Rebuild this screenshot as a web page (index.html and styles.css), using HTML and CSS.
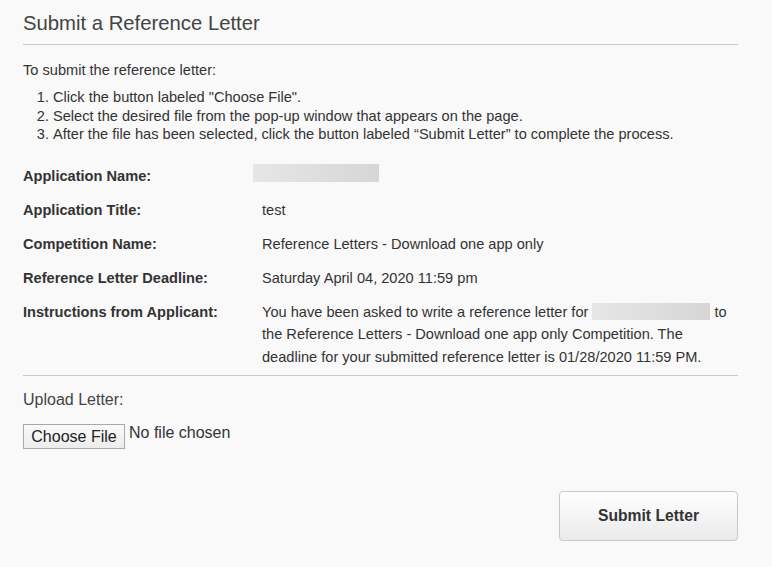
FILE: index.html
```html
<!DOCTYPE html>
<html>
<head>
<meta charset="utf-8">
<link rel="stylesheet" href="styles.css">
</head>
<body>
<div class="page">
  <h1 class="title">Submit a Reference Letter</h1>
  <p class="intro">To submit the reference letter:</p>
  <ol class="steps">
    <li>Click the button labeled "Choose File".</li>
    <li>Select the desired file from the pop-up window that appears on the page.</li>
    <li>After the file has been selected, click the button labeled “Submit Letter” to complete the process.</li>
  </ol>
  <div class="details">
    <div class="label">Application Name:</div>
    <div class="value"><span class="redact redact-name"></span></div>
    <div class="label">Application Title:</div>
    <div class="value">test</div>
    <div class="label">Competition Name:</div>
    <div class="value">Reference Letters - Download one app only</div>
    <div class="label">Reference Letter Deadline:</div>
    <div class="value">Saturday April 04, 2020 11:59 pm</div>
    <div class="label">Instructions from Applicant:</div>
    <div class="value multi">You have been asked to write a reference letter for <span class="redact redact-inline"></span> to the Reference Letters - Download one app only Competition. The deadline for your submitted reference letter is 01/28/2020 11:59 PM.</div>
  </div>
  <div class="upload">
    <div class="upload-label">Upload Letter:</div>
    <div class="file-row">
      <button class="choose" type="button">Choose File</button>
      <span class="no-file">No file chosen</span>
    </div>
  </div>
  <div class="actions">
    <button class="submit" type="button">Submit Letter</button>
  </div>
</div>
</body>
</html>
```
FILE: styles.css
```css
* { box-sizing: border-box; }
html, body { margin: 0; padding: 0; }
body {
  background: #f9f9f9;
  font-family: "Liberation Sans", Arial, sans-serif;
  color: #333;
}
.page {
  width: 715px;
  margin-left: 23px;
  padding-top: 10px;
}
.title {
  margin: 0;
  font-size: 20.3px;
  font-weight: normal;
  color: #444;
  line-height: 26px;
  padding-bottom: 8px;
  border-bottom: 1px solid #c8c8c8;
}
.intro {
  margin: 16px 0 0;
  font-size: 14.6px;
  line-height: 18px;
}
.steps {
  margin: 9px 0 0;
  padding-left: 30px;
  font-size: 14.6px;
  line-height: 18.5px;
}
.details {
  display: grid;
  grid-template-columns: 239px 1fr;
  row-gap: 11.5px;
  margin-top: 21px;
  font-size: 14.6px;
  line-height: 22.5px;
}
.label {
  font-weight: bold;
  font-size: 14.6px;
}
.value.multi { padding-right: 8px; }
.redact {
  display: inline-block;
  vertical-align: middle;
  background: linear-gradient(90deg, #e6e6e6, #d6d6d6);
}
.redact-name {
  width: 126px;
  height: 18px;
  margin-left: -9px;
  margin-top: -7px;
}
.redact-inline {
  width: 118px;
  height: 17px;
  margin-top: -3px;
}
.upload {
  border-top: 1px solid #c8c8c8;
  margin-top: 7px;
  padding-top: 14px;
}
.upload-label {
  font-size: 16px;
  line-height: 20px;
  color: #444;
}
.file-row {
  display: flex;
  align-items: flex-start;
  margin-top: 14px;
  gap: 4px;
}
.choose {
  font-family: "Liberation Sans", Arial, sans-serif;
  font-size: 16px;
  color: #222;
  height: 25px;
  width: 102px;
  padding: 0;
  margin: 0;
  border: 1px solid #a9a9a9;
  border-radius: 0;
  background: linear-gradient(#fafafa, #ececec);
  line-height: 23px;
}
.no-file {
  font-size: 16px;
  line-height: 18px;
  color: #333;
}
.actions {
  display: flex;
  justify-content: flex-end;
  margin-top: 42px;
}
.submit {
  width: 179px;
  height: 50px;
  font-family: "Liberation Sans", Arial, sans-serif;
  font-size: 15.7px;
  font-weight: bold;
  color: #333;
  border: 1px solid #c8c8c8;
  border-radius: 4px;
  background: linear-gradient(#ffffff, #eaeaea);
  box-shadow: 0 1px 1px rgba(0,0,0,0.06);
}
```
